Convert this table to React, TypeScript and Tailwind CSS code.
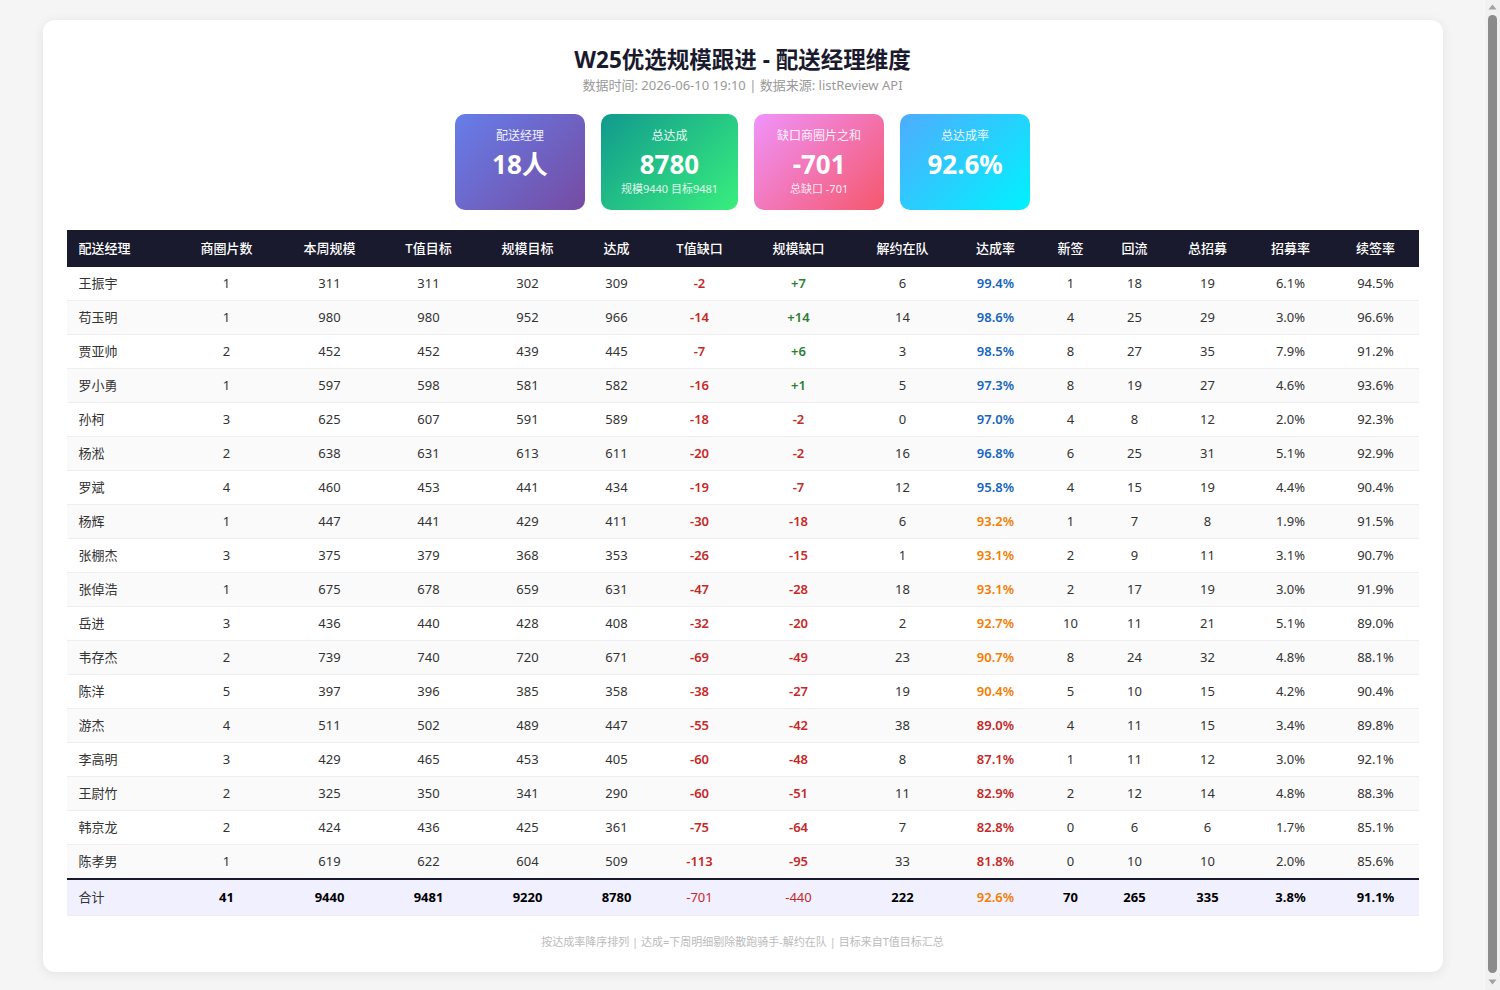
import React from "react";

type Row = [string, number, number, number, number, number, number, number, number, number, number, number, number, number, number];

const rows: Row[] = [
  ["王振宇", 1, 311, 311, 302, 309, -2, 7, 6, 99.4, 1, 18, 19, 6.1, 94.5],
  ["苟玉明", 1, 980, 980, 952, 966, -14, 14, 14, 98.6, 4, 25, 29, 3.0, 96.6],
  ["贾亚帅", 2, 452, 452, 439, 445, -7, 6, 3, 98.5, 8, 27, 35, 7.9, 91.2],
  ["罗小勇", 1, 597, 598, 581, 582, -16, 1, 5, 97.3, 8, 19, 27, 4.6, 93.6],
  ["孙柯", 3, 625, 607, 591, 589, -18, -2, 0, 97.0, 4, 8, 12, 2.0, 92.3],
  ["杨淞", 2, 638, 631, 613, 611, -20, -2, 16, 96.8, 6, 25, 31, 5.1, 92.9],
  ["罗斌", 4, 460, 453, 441, 434, -19, -7, 12, 95.8, 4, 15, 19, 4.4, 90.4],
  ["杨辉", 1, 447, 441, 429, 411, -30, -18, 6, 93.2, 1, 7, 8, 1.9, 91.5],
  ["张棚杰", 3, 375, 379, 368, 353, -26, -15, 1, 93.1, 2, 9, 11, 3.1, 90.7],
  ["张倬浩", 1, 675, 678, 659, 631, -47, -28, 18, 93.1, 2, 17, 19, 3.0, 91.9],
  ["岳进", 3, 436, 440, 428, 408, -32, -20, 2, 92.7, 10, 11, 21, 5.1, 89.0],
  ["韦存杰", 2, 739, 740, 720, 671, -69, -49, 23, 90.7, 8, 24, 32, 4.8, 88.1],
  ["陈洋", 5, 397, 396, 385, 358, -38, -27, 19, 90.4, 5, 10, 15, 4.2, 90.4],
  ["游杰", 4, 511, 502, 489, 447, -55, -42, 38, 89.0, 4, 11, 15, 3.4, 89.8],
  ["李高明", 3, 429, 465, 453, 405, -60, -48, 8, 87.1, 1, 11, 12, 3.0, 92.1],
  ["王尉竹", 2, 325, 350, 341, 290, -60, -51, 11, 82.9, 2, 12, 14, 4.8, 88.3],
  ["韩京龙", 2, 424, 436, 425, 361, -75, -64, 7, 82.8, 0, 6, 6, 1.7, 85.1],
  ["陈孝男", 1, 619, 622, 604, 509, -113, -95, 33, 81.8, 0, 10, 10, 2.0, 85.6],
];

const headers = [
  "配送经理", "商圈片数", "本周规模", "T值目标", "规模目标", "达成", "T值缺口", "规模缺口",
  "解约在队", "达成率", "新签", "回流", "总招募", "招募率", "续签率",
];

const colClasses = [
  "w-[108px]", "w-[104px]", "w-[102px]", "w-[96px]", "w-[102px]", "w-[76px]", "w-[90px]", "w-[108px]",
  "w-[100px]", "w-[86px]", "w-[64px]", "w-[64px]", "w-[82px]", "w-[84px]", "w-[86px]",
];

function signed(n: number) {
  return n > 0 ? `+${n}` : `${n}`;
}

function gapClass(n: number) {
  return n >= 0 ? "text-[#2e7d32] font-semibold" : "text-[#c62828] font-semibold";
}

function rateClass(r: number) {
  if (r >= 95) return "text-[#1565c0] font-semibold";
  if (r >= 90) return "text-[#f57c00] font-semibold";
  return "text-[#c62828] font-semibold";
}

function StatCard({ label, value, sub, bg }: { label: string; value: string; sub?: string; bg: string }) {
  return (
    <div className={`min-w-[130px] px-[20px] pt-[14px] pb-[14px] rounded-[10px] text-white text-center ${bg}`}>
      <div className="text-[12px] leading-[16px] opacity-90">{label}</div>
      <div className="mt-[2px] text-[26px] leading-[36px] font-bold">{value}</div>
      {sub ? <div className="text-[11px] leading-[14px] opacity-85">{sub}</div> : null}
    </div>
  );
}

function FakeScrollbar() {
  return (
    <div className="fixed right-0 top-0 w-[15px] h-screen bg-[#f1f1f1]">
      <svg className="absolute left-[3px] top-[4px]" width="9" height="6" viewBox="0 0 9 6">
        <path d="M0.5 5.5 L4.5 0.5 L8.5 5.5 Z" fill="#a3a3a3" />
      </svg>
      <div className="absolute left-[3px] top-[15px] bottom-[17px] w-[9px] rounded-full bg-[#8b8b8b]" />
      <svg className="absolute left-[3px] bottom-[5px]" width="9" height="6" viewBox="0 0 9 6">
        <path d="M0.5 0.5 L8.5 0.5 L4.5 5.5 Z" fill="#a3a3a3" />
      </svg>
    </div>
  );
}

export default function App() {
  const td = "py-[8px] leading-[17px] text-center border-b border-[#eeeeee]";
  const tf = "py-[9px] leading-[17px] text-center border-b border-[#eeeeee]";
  return (
    <div
      className="min-h-screen bg-[#f5f5f5] text-[#333333] pr-[15px]"
      style={{ fontFamily: '"Noto Sans", "Noto Sans CJK SC", sans-serif' }}
    >
      <div className="p-[20px]">
        <div className="max-w-[1400px] mx-auto bg-white rounded-[12px] shadow-[0_2px_12px_rgba(0,0,0,0.08)] px-[24px] pt-[24px] pb-[22px]">
          <h1 className="text-center text-[22.5px] leading-[31px] font-bold text-[#1a1a2e]">
            W25优选规模跟进 - 配送经理维度
          </h1>
          <div className="mt-[1px] text-center text-[13px] leading-[18px] text-[#999999]">
            数据时间: 2026-06-10 19:10 | 数据来源: listReview API
          </div>

          <div className="mt-[20px] flex justify-center gap-[16px]">
            <StatCard label="配送经理" value="18人" bg="bg-[linear-gradient(135deg,#667eea_0%,#764ba2_100%)]" />
            <StatCard label="总达成" value="8780" sub="规模9440 目标9481" bg="bg-[linear-gradient(135deg,#11998e_0%,#38ef7d_100%)]" />
            <StatCard label="缺口商圈片之和" value="-701" sub="总缺口 -701" bg="bg-[linear-gradient(135deg,#f093fb_0%,#f5576c_100%)]" />
            <StatCard label="总达成率" value="92.6%" bg="bg-[linear-gradient(135deg,#4facfe_0%,#00f2fe_100%)]" />
          </div>

          <table className="mt-[20px] w-full table-fixed border-collapse text-[13px]">
            <colgroup>
              {colClasses.map((c, i) => (
                <col key={i} className={c} />
              ))}
            </colgroup>
            <thead>
              <tr className="bg-[#1a1a2e] text-white">
                {headers.map((h, i) => (
                  <th
                    key={h}
                    className={`py-[10px] leading-[17px] font-medium ${i === 0 ? "text-left pl-[12px]" : "text-center"}`}
                  >
                    {h}
                  </th>
                ))}
              </tr>
            </thead>
            <tbody>
              {rows.map((r, idx) => (
                <tr key={r[0]} className={idx % 2 === 1 ? "bg-[#fafafa]" : "bg-white"}>
                  <td className="py-[8px] leading-[17px] text-left pl-[12px] border-b border-[#eeeeee]">{r[0]}</td>
                  <td className={td}>{r[1]}</td>
                  <td className={td}>{r[2]}</td>
                  <td className={td}>{r[3]}</td>
                  <td className={td}>{r[4]}</td>
                  <td className={td}>{r[5]}</td>
                  <td className={`${td} ${gapClass(r[6])}`}>{signed(r[6])}</td>
                  <td className={`${td} ${gapClass(r[7])}`}>{signed(r[7])}</td>
                  <td className={td}>{r[8]}</td>
                  <td className={`${td} ${rateClass(r[9])}`}>{r[9].toFixed(1)}%</td>
                  <td className={td}>{r[10]}</td>
                  <td className={td}>{r[11]}</td>
                  <td className={td}>{r[12]}</td>
                  <td className={td}>{r[13].toFixed(1)}%</td>
                  <td className={td}>{r[14].toFixed(1)}%</td>
                </tr>
              ))}
              <tr className="bg-[#f0f0ff] border-t-2 border-[#1a1a2e]">
                <td className="py-[9px] leading-[17px] text-left pl-[12px] border-b border-[#eeeeee]">合计</td>
                <td className={`${tf} font-bold text-black`}>41</td>
                <td className={`${tf} font-bold text-black`}>9440</td>
                <td className={`${tf} font-bold text-black`}>9481</td>
                <td className={`${tf} font-bold text-black`}>9220</td>
                <td className={`${tf} font-bold text-black`}>8780</td>
                <td className={`${tf} text-[#c62828]`}>-701</td>
                <td className={`${tf} text-[#c62828]`}>-440</td>
                <td className={`${tf} font-bold text-black`}>222</td>
                <td className={`${tf} font-semibold text-[#f57c00]`}>92.6%</td>
                <td className={`${tf} font-bold text-black`}>70</td>
                <td className={`${tf} font-bold text-black`}>265</td>
                <td className={`${tf} font-bold text-black`}>335</td>
                <td className={`${tf} font-bold text-black`}>3.8%</td>
                <td className={`${tf} font-bold text-black`}>91.1%</td>
              </tr>
            </tbody>
          </table>

          <div className="mt-[18px] text-center text-[11px] leading-[16px] text-[#bbbbbb]">
            按达成率降序排列 | 达成=下周明细剔除散跑骑手-解约在队 | 目标来自T值目标汇总
          </div>
        </div>
      </div>
      <FakeScrollbar />
    </div>
  );
}
